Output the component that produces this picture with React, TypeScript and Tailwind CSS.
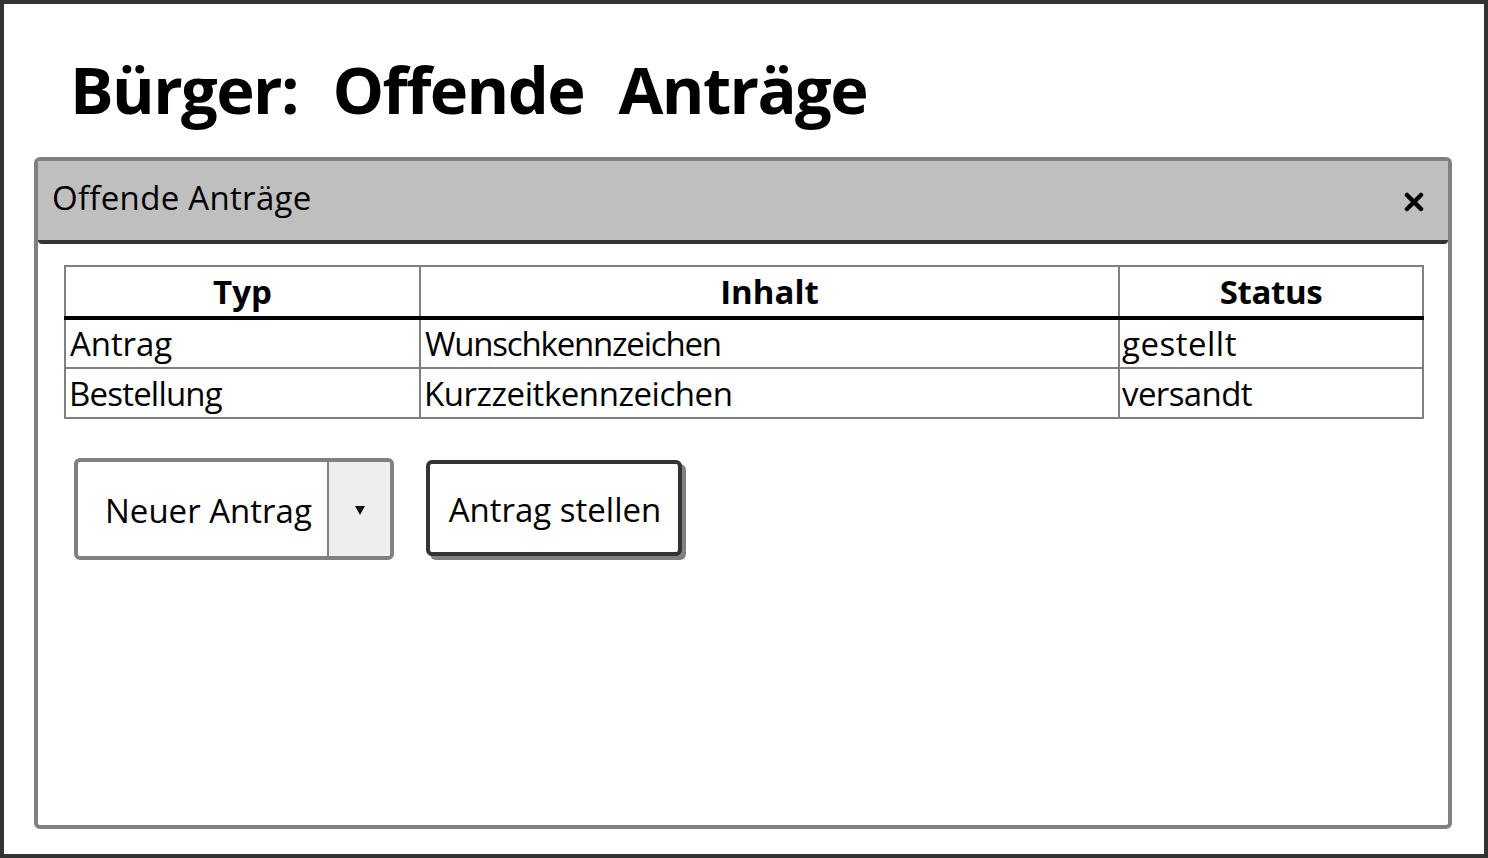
import React from "react";

const hand = "font-['Comic_Sans_MS','Open_Sans','Noto_Sans',sans-serif]";
const cell = "border-2 border-[#808080] text-[33px] leading-[46px] h-[50px] p-0 text-left font-normal whitespace-nowrap align-middle";
const head = "border-2 border-b-[4px] border-[#808080] border-b-black text-[33px] leading-[46px] h-[52px] p-0 text-center font-bold whitespace-nowrap align-middle";

export default function App() {
  return (
    <div className={`w-[1488px] h-[858px] box-border border-[4px] border-[#333333] bg-white text-black overflow-hidden flex flex-col ${hand}`}>
      <h1 className="h-[153px] shrink-0 pl-[66px] pt-[43px] text-[65px] leading-[84px] font-bold tracking-[-1.6px] [word-spacing:2px] whitespace-pre">Bürger:  Offende  Anträge</h1>
      <div className="ml-[30px] w-[1418px] h-[672px] box-border border-[4px] border-[#808080] rounded-[6px] flex flex-col">
        <div className="h-[83px] shrink-0 box-border bg-[#bfbfbf] border-b-[4px] border-[#333333] rounded-b-[4px] flex items-center justify-between pl-[14px] pr-[24px]">
          <span className="text-[33px] leading-[40px] tracking-[0.3px] -mt-[6px]">Offende Anträge</span>
          <svg width="20" height="20" viewBox="0 0 20 20" className="mt-[3px]">
            <path d="M3 3 L17 17 M17 3 L3 17" stroke="#000" strokeWidth="4.5" strokeLinecap="round" />
          </svg>
        </div>
        <div className="pl-[26px] pt-[21px]">
          <table className="w-[1358px] border-collapse table-fixed">
            <colgroup>
              <col className="w-[355px]" />
              <col className="w-[699px]" />
              <col className="w-[304px]" />
            </colgroup>
            <thead>
              <tr>
                <th className={head}>Typ</th>
                <th className={head}>Inhalt</th>
                <th className={`${head} tracking-[-0.4px]`}>Status</th>
              </tr>
            </thead>
            <tbody>
              <tr>
                <td className={`${cell} pl-[4px] tracking-[-0.1px]`}>Antrag</td>
                <td className={`${cell} pl-[4px] tracking-[-1.2px]`}>Wunschkennzeichen</td>
                <td className={`${cell} pl-[2px] tracking-[0.5px]`}>gestellt</td>
              </tr>
              <tr>
                <td className={`${cell} pl-[3px] tracking-[-0.8px]`}><span className="relative top-[1px]">Bestellung</span></td>
                <td className={`${cell} pl-[3px] tracking-[-0.45px]`}><span className="relative top-[1px]">Kurzzeitkennzeichen</span></td>
                <td className={`${cell} pl-[2px] tracking-[-0.6px]`}><span className="relative top-[1px]">versandt</span></td>
              </tr>
            </tbody>
          </table>
          <div className="flex items-start mt-[39px] ml-[10px]">
            <div className="w-[320px] h-[102px] box-border border-[4px] border-[#808080] rounded-[6px] flex overflow-hidden">
              <div className="w-[249px] box-border flex items-center pl-[27px] pt-[3px] text-[33px] leading-[40px] whitespace-nowrap">Neuer Antrag</div>
              <div className="flex-1 border-l-2 border-[#808080] bg-[#eeeeee] flex items-center justify-center">
                <svg width="12" height="12" viewBox="0 0 12 12" className="mt-[1px]"><path d="M1 2 H11 L6 11 Z" fill="#111" /></svg>
              </div>
            </div>
            <button className="ml-[32px] mt-[2px] w-[256px] h-[96px] box-border border-[4px] border-[#333333] rounded-[6px] bg-white shadow-[4px_4px_0_#808080] pl-[2px] pt-[3px] text-[33px] leading-[40px] whitespace-nowrap">Antrag stellen</button>
          </div>
        </div>
      </div>
    </div>
  );
}
